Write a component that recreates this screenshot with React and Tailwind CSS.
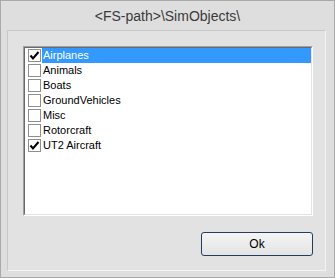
import { useState } from 'react';

const items = [
  { name: 'Airplanes', checked: true },
  { name: 'Animals', checked: false },
  { name: 'Boats', checked: false },
  { name: 'GroundVehicles', checked: false },
  { name: 'Misc', checked: false },
  { name: 'Rotorcraft', checked: false },
  { name: 'UT2 Aircraft', checked: true },
];

function Box({ checked }) {
  return (
    <span className="w-[13px] h-[13px] shrink-0 border border-[#8e8f8f] bg-white flex items-center justify-center">
      {checked && (
        <svg width="11" height="11" viewBox="0 0 11 11">
          <path d="M1.5 5.5 L4 8.5 L9.5 2" fill="none" stroke="#000" strokeWidth="2" />
        </svg>
      )}
    </span>
  );
}

export default function App() {
  const [rows, setRows] = useState(items);
  const [selected, setSelected] = useState(0);

  const toggle = (i) => {
    setSelected(i);
    setRows(rows.map((r, j) => (j === i ? { ...r, checked: !r.checked } : r)));
  };

  return (
    <div
      className="w-[335px] h-[278px] bg-[#dedede] border border-[#a9a9a9] flex flex-col"
      style={{ fontFamily: '"Liberation Sans", Arial, sans-serif' }}
    >
      <div className="h-[29px] flex items-center justify-center text-[14px] text-[#3a3a3a] pt-[1px]">
        &lt;FS-path&gt;\SimObjects\
      </div>

      <div className="flex-1 ml-[6px] mr-[8px] mb-[6px] border border-t-[#c8c8c8] border-l-[#c8c8c8] border-r-[#f4f4f4] border-b-[#f4f4f4] bg-[#e2e2e2] flex flex-col pt-[15px] pl-[15px] pr-[12px] pb-[14px]">
        <div className="h-[170px] border border-t-[#a0a0a0] border-l-[#a0a0a0] border-r-white border-b-white">
          <div className="h-full border border-t-[#696969] border-l-[#696969] border-r-[#e3e3e3] border-b-[#e3e3e3] bg-white flex flex-col pl-[3px]">
            {rows.map((r, i) => (
              <div
                key={r.name}
                onClick={() => toggle(i)}
                className="h-[15px] flex items-center gap-[1px] cursor-default"
              >
                <Box checked={r.checked} />
                <span
                  className={`flex-1 h-full flex items-center pl-[1px] text-[11px] ${
                    selected === i ? 'bg-[#3399ff] text-white' : 'text-black'
                  }`}
                >
                  {r.name}
                </span>
              </div>
            ))}
          </div>
        </div>

        <div className="flex justify-end mt-[16px]">
          <button className="w-[112px] h-[24px] rounded-[3px] border border-[#243d5c] bg-gradient-to-b from-[#f4f4f4] to-[#e4e4e4] text-[12px] text-black">
            Ok
          </button>
        </div>
      </div>
    </div>
  );
}
